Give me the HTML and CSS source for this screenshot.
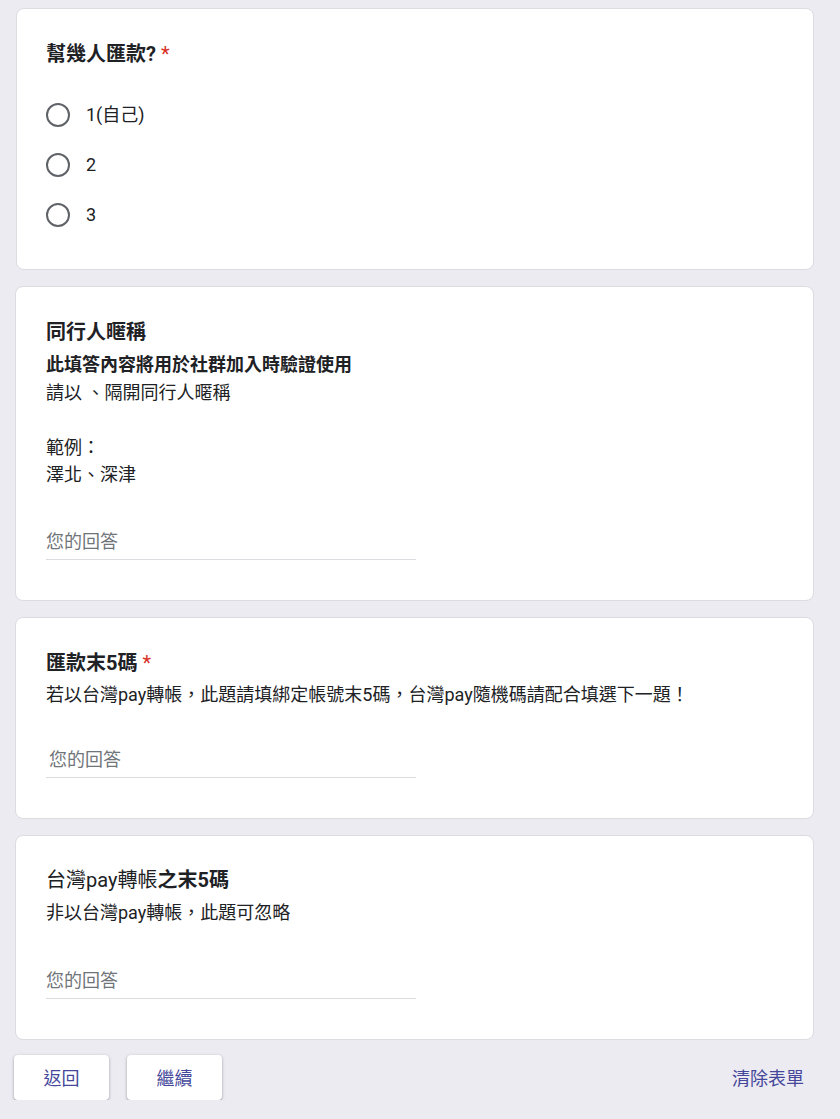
FILE: index.html
```html
<!DOCTYPE html>
<html lang="zh-Hant">
<head>
<meta charset="utf-8">
<title>表單</title>
<link rel="stylesheet" href="styles.css">
</head>
<body>
<main class="form">
  <section class="card card-radio">
    <h2 class="q-title">幫幾人匯款? <span class="req">*</span></h2>
    <div class="options">
      <label class="option"><span class="radio"></span><span class="opt-text">1(自己)</span></label>
      <label class="option"><span class="radio"></span><span class="opt-text">2</span></label>
      <label class="option"><span class="radio"></span><span class="opt-text">3</span></label>
    </div>
  </section>

  <section class="card card-nick">
    <h2 class="q-title">同行人暱稱</h2>
    <div class="q-desc">
      <div class="bold">此填答內容將用於社群加入時驗證使用</div>
      <div>請以 <span class="p">、</span>隔開同行人暱稱</div>
      <div>&nbsp;</div>
      <div>範例<span class="p">：</span></div>
      <div>澤北<span class="p">、</span>深津</div>
    </div>
    <div class="answer"><span class="placeholder">您的回答</span></div>
  </section>

  <section class="card card-code">
    <h2 class="q-title">匯款末5碼 <span class="req">*</span></h2>
    <div class="q-desc">
      <div>若以台灣pay轉帳<span class="p">，</span>此題請填綁定帳號末5碼<span class="p">，</span>台灣pay隨機碼請配合填選下一題<span class="p">！</span></div>
    </div>
    <div class="answer"><span class="placeholder indent">您的回答</span></div>
  </section>

  <section class="card card-last">
    <h2 class="q-title"><span class="normal">台灣pay轉帳</span>之末5碼</h2>
    <div class="q-desc">
      <div>非以台灣pay轉帳<span class="p">，</span>此題可忽略</div>
    </div>
    <div class="answer"><span class="placeholder">您的回答</span></div>
  </section>

  <div class="nav">
    <div class="nav-left">
      <button class="btn">返回</button>
      <button class="btn">繼續</button>
    </div>
    <button class="link-btn">清除表單</button>
  </div>
</main>
</body>
</html>
```

FILE: styles.css
```css
* { box-sizing: border-box; }

html, body {
  margin: 0;
  padding: 0;
  background: #ecebf2;
}

body {
  font-family: Roboto, "Noto Sans CJK TC", sans-serif;
  color: #202124;
  font-size: 18px;
}

.p {
  font-family: "Noto Sans CJK SC", sans-serif;
  line-height: 1;
}

.form {
  padding: 8px 26px 0 15px;
  display: flex;
  flex-direction: column;
  gap: 16px;
}

.card {
  background: #fff;
  border: 1px solid #dadce0;
  border-radius: 8px;
  padding: 31px 29px 40px 30px;
}

.card-radio {
  padding: 31px 29px 29px 29px;
  margin-left: 1px;
}

.q-title {
  margin: 0;
  font-size: 20px;
  font-weight: 700;
  line-height: 28px;
  letter-spacing: 0;
}

.q-title .normal { font-weight: 400; }

.req { color: #d93025; font-weight: 400; }

.options {
  margin-top: 22px;
  display: flex;
  flex-direction: column;
}

.option {
  height: 50px;
  display: flex;
  align-items: center;
}

.radio {
  width: 24px;
  height: 24px;
  border: 2px solid #5f6368;
  border-radius: 50%;
  flex: none;
}

.opt-text {
  margin-left: 16px;
  line-height: 24px;
}

.q-desc {
  margin-top: 5px;
  line-height: 27.5px;
}

.q-desc > div {
  height: 27.5px;
  overflow: visible;
  white-space: nowrap;
}

.q-desc .bold { font-weight: 700; }

.answer {
  margin-top: 41px;
  width: 370px;
  border-bottom: 1px solid #dadce0;
  padding-bottom: 5px;
  line-height: 24px;
}

.card-code .q-desc { margin-top: 4px; }
.card-code .answer { margin-top: 40px; }

.card-last { padding-top: 30px; }
.card-last .answer { margin-top: 42px; }

.placeholder { color: #70757a; }
.placeholder.indent { padding-left: 3px; }

.nav {
  display: flex;
  justify-content: space-between;
  align-items: center;
  margin-top: -1px;
  margin-left: -1px;
}

.nav-left {
  display: flex;
  gap: 18px;
}

.btn {
  font: inherit;
  font-size: 18px;
  color: #45489a;
  background: #fff;
  border: none;
  border-radius: 4px;
  width: 95px;
  height: 45px;
  box-shadow: 0 1px 2px rgba(60, 64, 67, 0.35), 0 1px 3px 1px rgba(60, 64, 67, 0.12);
  cursor: pointer;
}

.link-btn {
  font: inherit;
  font-size: 18px;
  color: #45489a;
  background: transparent;
  border: none;
  padding: 0 10px;
  height: 45px;
  cursor: pointer;
}
```
